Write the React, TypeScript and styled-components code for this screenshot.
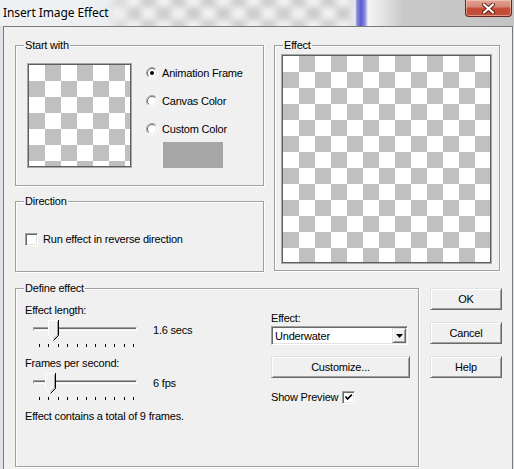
import React from "react";
import styled, { createGlobalStyle } from "styled-components";

const GlobalStyle = createGlobalStyle`
  html, body {
    margin: 0;
    padding: 0;
    background: #f0f0f0;
  }
`;

const Window = styled.div`
  width: 514px;
  height: 469px;
  display: flex;
  flex-direction: column;
  background: #dfe3e8;
  overflow: hidden;
  font-family: "Liberation Sans", Arial, sans-serif;
  font-size: 11px;
  letter-spacing: -0.2px;
  color: #000;
`;

const TitleBar = styled.div`
  position: relative;
  flex: none;
  height: 26px;
  display: flex;
  align-items: flex-start;
  background: linear-gradient(
    90deg,
    #eef0f2 0,
    #e9ebee 355px,
    #8a8adc 357px,
    #5a5acb 361px,
    #8c8cde 365px,
    #f4f4f4 368px,
    #e2e2e2 384px,
    #c8c8c8 404px,
    #c4c4c4 100%
  );
  overflow: hidden;
`;

const Backdrop = styled.div`
  position: absolute;
  left: 96px;
  top: -4px;
  width: 258px;
  height: 34px;
  background: conic-gradient(#cbcbcb 25%, #f2f2f2 0 50%, #cbcbcb 0 75%, #f2f2f2 0) 0 -2px / 30px 26px;
  filter: blur(3px);
  mask-image: linear-gradient(90deg, transparent 0, #000 40px, #000 100%);
`;

const Title = styled.div`
  position: relative;
  margin: 5px 0 0 3px;
  font-family: "Noto Sans", "Open Sans", sans-serif;
  font-size: 12px;
  letter-spacing: -0.1px;
  line-height: 15px;
  text-shadow: 0 0 6px #fff, 0 0 10px #fff;
`;

const CloseButton = styled.div`
  position: relative;
  margin: 0 2px 0 auto;
  width: 45px;
  height: 16px;
  display: flex;
  align-items: center;
  justify-content: center;
  border: 1px solid #6e2219;
  border-top: none;
  border-radius: 0 0 4px 4px;
  background: linear-gradient(#e2a292 0, #d68a78 40%, #c54a34 55%, #c2503a 100%);
  box-shadow: inset 0 0 0 1px rgba(255, 230, 220, 0.45);
`;

const Client = styled.div`
  flex: 1;
  margin: 0 1px 0 3px;
  border: 1px solid #7a7a7a;
  border-bottom: none;
  background: #f0f0f0;
  padding: 18px 0 0 11px;
  display: flex;
  flex-direction: column;
`;

const TopRow = styled.div`
  display: flex;
  gap: 10px;
`;

const Column = styled.div`
  display: flex;
  flex-direction: column;
  gap: 15px;
`;

const BottomRow = styled.div`
  display: flex;
  gap: 11px;
  margin-top: 16px;
`;

const Group = styled.div<{ $w: number; $h: number }>`
  position: relative;
  box-sizing: border-box;
  width: ${(p) => p.$w}px;
  height: ${(p) => p.$h}px;
  border: 1px solid #a0a0a0;
  box-shadow: 1px 1px 0 #fff, inset 1px 1px 0 #fff;
`;

const Legend = styled.span`
  position: absolute;
  left: 8px;
  top: -8px;
  padding: 0 1px;
  background: #f0f0f0;
  line-height: 14px;
  white-space: nowrap;
`;

const StartBody = styled.div`
  display: flex;
  padding: 18px 0 0 12px;
`;

const Preview = styled.div<{ $w: number; $h: number }>`
  flex: none;
  box-sizing: border-box;
  width: ${(p) => p.$w}px;
  height: ${(p) => p.$h}px;
  border: 1px solid #5f5f5f;
  box-shadow: 0 0 0 1px #a8a8a8;
  background: conic-gradient(#c0c0c0 25%, #fff 0 50%, #c0c0c0 0 75%, #fff 0) 0 0 / 32px 32px;
`;

const Options = styled.div`
  display: flex;
  flex-direction: column;
  margin: -5px 0 0 15px;
`;

const OptionRow = styled.label`
  display: flex;
  align-items: center;
  gap: 4px;
  height: 28px;
  line-height: 14px;
  white-space: nowrap;
`;

const Swatch = styled.div`
  width: 60px;
  height: 26px;
  margin: -1px 0 0 17px;
  background: #a6a6a6;
`;

const EffectBody = styled.div`
  padding: 9px 0 0 7px;
`;

const CheckRow = styled.label<{ $gap: number }>`
  display: flex;
  align-items: center;
  gap: ${(p) => p.$gap}px;
  line-height: 14px;
  white-space: nowrap;
`;

const DirectionBody = styled.div`
  padding: 30px 0 0 9px;
`;

const Box = styled.span`
  flex: none;
  box-sizing: border-box;
  width: 13px;
  height: 13px;
  display: flex;
  align-items: center;
  justify-content: center;
  border: 1px solid;
  border-color: #a0a0a0 #fff #fff #a0a0a0;
  box-shadow: inset 1px 1px 0 #696969, inset -1px -1px 0 #e3e3e3;
  background: #fff;
`;

const DefineBody = styled.div`
  display: flex;
  padding: 14px 0 0 9px;
`;

const DefineLeft = styled.div`
  width: 246px;
  display: flex;
  flex-direction: column;
`;

const DefineRight = styled.div`
  width: 139px;
  display: flex;
  flex-direction: column;
  padding-top: 8px;
`;

const Text = styled.div`
  line-height: 14px;
  white-space: nowrap;
`;

const SliderRow = styled.div`
  display: flex;
  align-items: flex-start;
`;

const SliderBox = styled.div`
  position: relative;
  flex: none;
  width: 128px;
  height: 39px;
`;

const Track = styled.div`
  box-sizing: border-box;
  width: 104px;
  height: 4px;
  margin: 10px 0 0 8px;
  border: 1px solid;
  border-color: #a0a0a0 #fff #fff #a0a0a0;
  box-shadow: inset 0 1px 0 #696969;
`;

const Ticks = styled.div`
  display: flex;
  justify-content: space-between;
  width: 95px;
  height: 3px;
  margin: 13px 0 0 14px;
`;

const Tick = styled.i`
  width: 1px;
  height: 3px;
  background: #000;
`;

const Thumb = styled.svg<{ $left: number }>`
  position: absolute;
  top: 3px;
  left: ${(p) => p.$left}px;
`;

const Value = styled.div`
  margin-top: 6px;
  line-height: 14px;
  white-space: nowrap;
`;

const Select = styled.div`
  box-sizing: border-box;
  width: 137px;
  height: 19px;
  margin-top: 1px;
  display: flex;
  align-items: center;
  padding: 0 1px 0 3px;
  border: 1px solid;
  border-color: #a0a0a0 #fff #fff #a0a0a0;
  box-shadow: inset 1px 1px 0 #696969, inset -1px -1px 0 #e3e3e3;
  background: #fff;
`;

const SelectText = styled.span`
  flex: 1;
  line-height: 14px;
`;

const SelectArrow = styled.span`
  box-sizing: border-box;
  width: 14px;
  height: 15px;
  display: flex;
  align-items: center;
  justify-content: center;
  background: #f0f0f0;
  border: 1px solid;
  border-color: #e3e3e3 #696969 #696969 #e3e3e3;
  box-shadow: inset 1px 1px 0 #fff, inset -1px -1px 0 #a0a0a0;
`;

const Button = styled.div<{ $w: number }>`
  box-sizing: border-box;
  width: ${(p) => p.$w}px;
  height: 22px;
  display: flex;
  align-items: center;
  justify-content: center;
  border: 1px solid;
  border-color: #e3e3e3 #696969 #696969 #e3e3e3;
  box-shadow: inset 1px 1px 0 #fff, inset -1px -1px 0 #a0a0a0;
  background: #f0f0f0;
  line-height: 14px;
`;

const CustomizeButton = styled(Button)`
  margin-top: 11px;
`;

const ShowRow = styled(CheckRow)`
  margin-top: 12px;
`;

const Buttons = styled.div`
  display: flex;
  flex-direction: column;
  gap: 12px;
`;

const Radio: React.FC<{ checked?: boolean }> = ({ checked }) => (
  <svg width="12" height="12" viewBox="0 0 12 12">
    <circle cx="6" cy="6" r="5.5" fill="#fff" />
    <path d="M2.1 9.9 A5.5 5.5 0 0 1 9.9 2.1" fill="none" stroke="#a0a0a0" />
    <path d="M9.9 2.1 A5.5 5.5 0 0 1 2.1 9.9" fill="none" stroke="#fff" />
    <path d="M2.8 9.2 A4.5 4.5 0 0 1 9.2 2.8" fill="none" stroke="#696969" />
    <path d="M9.2 2.8 A4.5 4.5 0 0 1 2.8 9.2" fill="none" stroke="#e3e3e3" />
    {checked && <circle cx="6" cy="6" r="2" fill="#000" />}
  </svg>
);

const Check: React.FC<{ checked?: boolean }> = ({ checked }) => (
  <Box>
    {checked && (
      <svg width="9" height="9" viewBox="0 0 9 9">
        <path d="M1.5 3.5 L3.5 6 L7.8 1.6" fill="none" stroke="#000" strokeWidth="1.7" />
      </svg>
    )}
  </Box>
);

const Slider: React.FC<{ thumb: number; value: string }> = ({ thumb, value }) => (
  <SliderRow>
    <SliderBox>
      <Track />
      <Ticks>
        {Array.from({ length: 11 }).map((_, i) => (
          <Tick key={i} />
        ))}
      </Ticks>
      <Thumb $left={thumb} width="11" height="21" viewBox="0 0 11 21">
        <path d="M0.5 0.5 H10.5 V15.5 L5.5 20.5 L0.5 15.5 Z" fill="#f0f0f0" />
        <path d="M0.5 15.5 V0.5 H10" fill="none" stroke="#fff" />
        <path d="M0.5 15.5 L5 20" fill="none" stroke="#fff" />
        <path d="M10.5 0 V15.5 L5.5 20.5" fill="none" stroke="#000" />
        <path d="M9.5 1.5 V15 L5.5 19" fill="none" stroke="#a0a0a0" />
      </Thumb>
    </SliderBox>
    <Value>{value}</Value>
  </SliderRow>
);

const App: React.FC = () => {
  return (
    <Window>
      <GlobalStyle />
      <TitleBar>
        <Backdrop />
        <Title>Insert Image Effect</Title>
        <CloseButton>
          <svg width="13" height="11" viewBox="0 0 13 11">
            <path d="M2 1.5 L11 9.5 M11 1.5 L2 9.5" stroke="#5a1a12" strokeWidth="4" strokeLinecap="round" />
            <path d="M2 1.5 L11 9.5 M11 1.5 L2 9.5" stroke="#fff" strokeWidth="2.2" strokeLinecap="round" />
          </svg>
        </CloseButton>
      </TitleBar>

      <Client>
        <TopRow>
          <Column>
            <Group $w={249} $h={141}>
              <Legend>Start with</Legend>
              <StartBody>
                <Preview $w={103} $h={103} />
                <Options>
                  <OptionRow>
                    <Radio checked />
                    Animation Frame
                  </OptionRow>
                  <OptionRow>
                    <Radio />
                    Canvas Color
                  </OptionRow>
                  <OptionRow>
                    <Radio />
                    Custom Color
                  </OptionRow>
                  <Swatch />
                </Options>
              </StartBody>
            </Group>

            <Group $w={249} $h={71}>
              <Legend>Direction</Legend>
              <DirectionBody>
                <CheckRow $gap={5}>
                  <Check />
                  Run effect in reverse direction
                </CheckRow>
              </DirectionBody>
            </Group>
          </Column>

          <Group $w={226} $h={226}>
            <Legend>Effect</Legend>
            <EffectBody>
              <Preview $w={209} $h={208} />
            </EffectBody>
          </Group>
        </TopRow>

        <BottomRow>
          <Group $w={404} $h={179}>
            <Legend>Define effect</Legend>
            <DefineBody>
              <DefineLeft>
                <Text>Effect length:</Text>
                <Slider thumb={23} value="1.6 secs" />
                <Text>Frames per second:</Text>
                <Slider thumb={20} value="6 fps" />
                <Text>Effect contains a total of 9 frames.</Text>
              </DefineLeft>
              <DefineRight>
                <Text>Effect:</Text>
                <Select>
                  <SelectText>Underwater</SelectText>
                  <SelectArrow>
                    <svg width="7" height="4" viewBox="0 0 7 4">
                      <path d="M0 0 H7 L3.5 4 Z" fill="#000" />
                    </svg>
                  </SelectArrow>
                </Select>
                <CustomizeButton $w={139}>Customize...</CustomizeButton>
                <ShowRow $gap={4}>
                  Show Preview
                  <Check checked />
                </ShowRow>
              </DefineRight>
            </DefineBody>
          </Group>

          <Buttons>
            <Button $w={72}>OK</Button>
            <Button $w={72}>Cancel</Button>
            <Button $w={72}>Help</Button>
          </Buttons>
        </BottomRow>
      </Client>
    </Window>
  );
};

export default App;
